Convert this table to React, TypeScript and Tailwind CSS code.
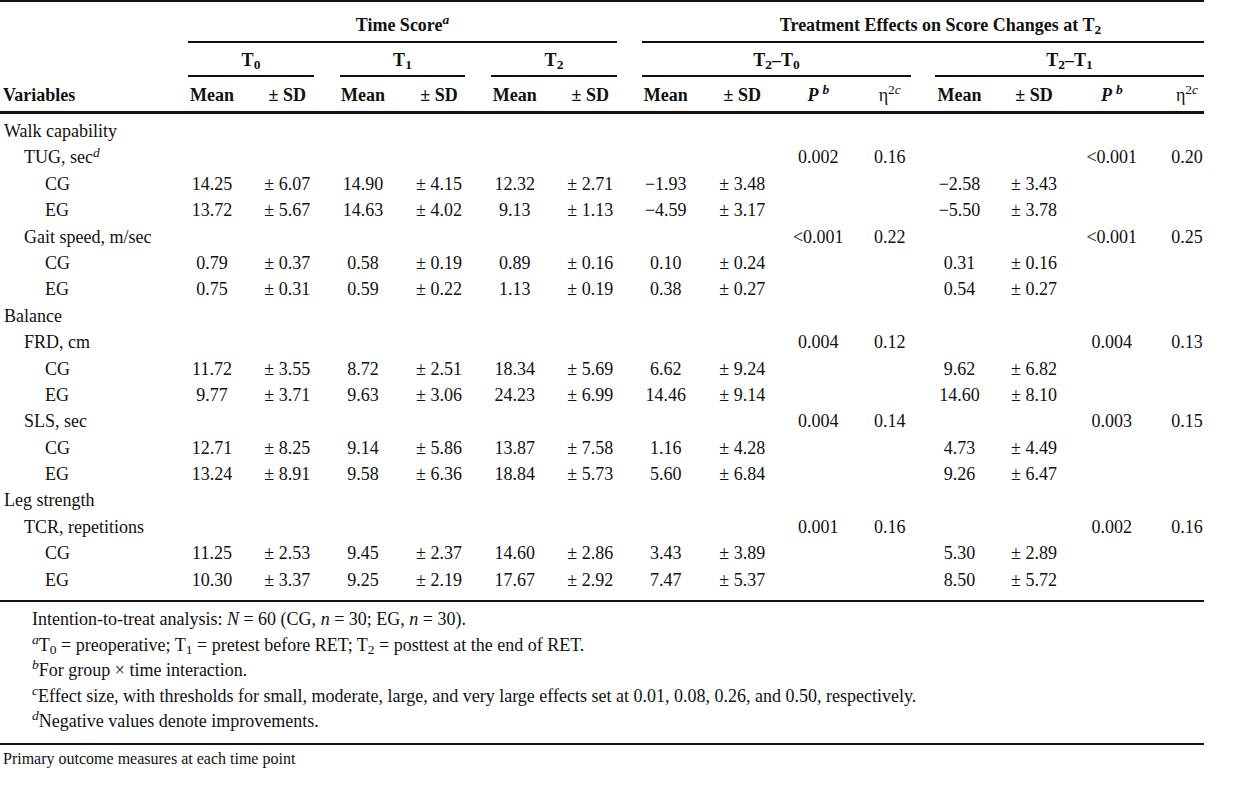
import React from "react";

type Row = {
  label: React.ReactNode;
  level: 0 | 1 | 2;
  v?: string[]; // 14 values
};

const E = "";
const rows: Row[] = [
  { label: "Walk capability", level: 0 },
  {
    label: (
      <>
        TUG, sec<sup className="italic">d</sup>
      </>
    ),
    level: 1,
    v: [E, E, E, E, E, E, E, E, "0.002", "0.16", E, E, "<0.001", "0.20"],
  },
  { label: "CG", level: 2, v: ["14.25", "± 6.07", "14.90", "± 4.15", "12.32", "± 2.71", "−1.93", "± 3.48", E, E, "−2.58", "± 3.43", E, E] },
  { label: "EG", level: 2, v: ["13.72", "± 5.67", "14.63", "± 4.02", "9.13", "± 1.13", "−4.59", "± 3.17", E, E, "−5.50", "± 3.78", E, E] },
  { label: "Gait speed, m/sec", level: 1, v: [E, E, E, E, E, E, E, E, "<0.001", "0.22", E, E, "<0.001", "0.25"] },
  { label: "CG", level: 2, v: ["0.79", "± 0.37", "0.58", "± 0.19", "0.89", "± 0.16", "0.10", "± 0.24", E, E, "0.31", "± 0.16", E, E] },
  { label: "EG", level: 2, v: ["0.75", "± 0.31", "0.59", "± 0.22", "1.13", "± 0.19", "0.38", "± 0.27", E, E, "0.54", "± 0.27", E, E] },
  { label: "Balance", level: 0 },
  { label: "FRD, cm", level: 1, v: [E, E, E, E, E, E, E, E, "0.004", "0.12", E, E, "0.004", "0.13"] },
  { label: "CG", level: 2, v: ["11.72", "± 3.55", "8.72", "± 2.51", "18.34", "± 5.69", "6.62", "± 9.24", E, E, "9.62", "± 6.82", E, E] },
  { label: "EG", level: 2, v: ["9.77", "± 3.71", "9.63", "± 3.06", "24.23", "± 6.99", "14.46", "± 9.14", E, E, "14.60", "± 8.10", E, E] },
  { label: "SLS, sec", level: 1, v: [E, E, E, E, E, E, E, E, "0.004", "0.14", E, E, "0.003", "0.15"] },
  { label: "CG", level: 2, v: ["12.71", "± 8.25", "9.14", "± 5.86", "13.87", "± 7.58", "1.16", "± 4.28", E, E, "4.73", "± 4.49", E, E] },
  { label: "EG", level: 2, v: ["13.24", "± 8.91", "9.58", "± 6.36", "18.84", "± 5.73", "5.60", "± 6.84", E, E, "9.26", "± 6.47", E, E] },
  { label: "Leg strength", level: 0 },
  { label: "TCR, repetitions", level: 1, v: [E, E, E, E, E, E, E, E, "0.001", "0.16", E, E, "0.002", "0.16"] },
  { label: "CG", level: 2, v: ["11.25", "± 2.53", "9.45", "± 2.37", "14.60", "± 2.86", "3.43", "± 3.89", E, E, "5.30", "± 2.89", E, E] },
  { label: "EG", level: 2, v: ["10.30", "± 3.37", "9.25", "± 2.19", "17.67", "± 2.92", "7.47", "± 5.37", E, E, "8.50", "± 5.72", E, E] },
];

const gridCols =
  "grid grid-cols-[174.5px_75px_75.5px_76px_76px_75.5px_75.5px_75.5px_77.5px_74.5px_68.5px_71px_78px_77.5px_73px]";

const padFor = (l: number) => (l === 0 ? "pl-[4px]" : l === 1 ? "pl-[24px]" : "pl-[45px]");

function Pb() {
  return (
    <span className="italic font-bold">
      P<sup className="ml-[4px]">b</sup>
    </span>
  );
}

function Eta() {
  return (
    <span className="font-normal">
      η<sup className="font-normal">
        2<span className="italic">c</span>
      </sup>
    </span>
  );
}

function T({ n }: { n: number }) {
  return (
    <>
      T<sub>{n}</sub>
    </>
  );
}

export default function App() {
  return (
    <div
      className="w-[1245px] h-[788px] bg-white text-[#111] overflow-hidden"
      style={{ fontFamily: '"Liberation Serif", "Times New Roman", serif' }}
    >
      <div className="w-[1204px] text-[18px] leading-[26px]">
        {/* top rule */}
        <div className="h-[2px] bg-[#111]" />
        {/* header row 1 */}
        <div className="flex font-bold pt-[10px]">
          <div className="w-[188px] shrink-0" />
          <div className="w-[429px] shrink-0 text-center border-b-2 border-[#111] pb-[3px]">
            Time Score<sup className="italic font-bold">a</sup>
          </div>
          <div className="w-[25px] shrink-0" />
          <div className="w-[562px] shrink-0 text-center border-b-2 border-[#111] pb-[3px] pl-[35px]">
            Treatment Effects on Score Changes at <T n={2} />
          </div>
        </div>
        {/* header row 2 */}
        <div className="flex font-bold pt-[4px]">
          <div className="w-[188px] shrink-0" />
          <div className="w-[126px] shrink-0 text-center border-b-2 border-[#111] pb-[2px]">
            <T n={0} />
          </div>
          <div className="w-[26px] shrink-0" />
          <div className="w-[125px] shrink-0 text-center border-b-2 border-[#111] pb-[2px]">
            <T n={1} />
          </div>
          <div className="w-[26px] shrink-0" />
          <div className="w-[126px] shrink-0 text-center border-b-2 border-[#111] pb-[2px]">
            <T n={2} />
          </div>
          <div className="w-[25px] shrink-0" />
          <div className="w-[269px] shrink-0 text-center border-b-2 border-[#111] pb-[2px]">
            <T n={2} />–<T n={0} />
          </div>
          <div className="w-[24px] shrink-0" />
          <div className="w-[269px] shrink-0 text-center border-b-2 border-[#111] pb-[2px]">
            <T n={2} />–<T n={1} />
          </div>
        </div>
        {/* header row 3 */}
        <div className={`${gridCols} font-bold pt-[5px] pb-[3px] border-b-[3px] border-[#111]`}>
          <div className="pl-[3px]">Variables</div>
          <div className="text-center">Mean</div>
          <div className="text-center">± SD</div>
          <div className="text-center">Mean</div>
          <div className="text-center">± SD</div>
          <div className="text-center">Mean</div>
          <div className="text-center">± SD</div>
          <div className="text-center">Mean</div>
          <div className="text-center">± SD</div>
          <div className="text-center">
            <Pb />
          </div>
          <div className="text-center">
            <Eta />
          </div>
          <div className="text-center">Mean</div>
          <div className="text-center">± SD</div>
          <div className="text-center">
            <Pb />
          </div>
          <div className="text-center">
            <Eta />
          </div>
        </div>
        {/* body */}
        <div className="pt-[4px] pb-[7px] border-b-2 border-[#111]">
          {rows.map((r, i) => (
            <div key={i} className={`${gridCols} h-[26.4px] leading-[26.4px]`}>
              <div className={`${padFor(r.level)} whitespace-nowrap`}>{r.label}</div>
              {(r.v ?? Array(14).fill(E)).map((val, j) => (
                <div key={j} className="text-center whitespace-nowrap">
                  {val}
                </div>
              ))}
            </div>
          ))}
        </div>
        {/* footnotes */}
        <div className="pl-[32px] pt-[5px] pb-[8px] leading-[25.5px] border-b-2 border-[#111]">
          <div>
            Intention-to-treat analysis: <span className="italic">N</span> = 60 (CG, <span className="italic">n</span> = 30; EG,{" "}
            <span className="italic">n</span> = 30).
          </div>
          <div>
            <sup className="italic">a</sup>T<sub>0</sub> = preoperative; T<sub>1</sub> = pretest before RET; T<sub>2</sub> = posttest at the end of RET.
          </div>
          <div>
            <sup className="italic">b</sup>For group × time interaction.
          </div>
          <div>
            <sup className="italic">c</sup>Effect size, with thresholds for small, moderate, large, and very large effects set at 0.01, 0.08, 0.26, and 0.50, respectively.
          </div>
          <div>
            <sup className="italic">d</sup>Negative values denote improvements.
          </div>
        </div>
        <div className="pl-[3px] pt-[4px] text-[16px] leading-[20px]">Primary outcome measures at each time point</div>
      </div>
    </div>
  );
}
